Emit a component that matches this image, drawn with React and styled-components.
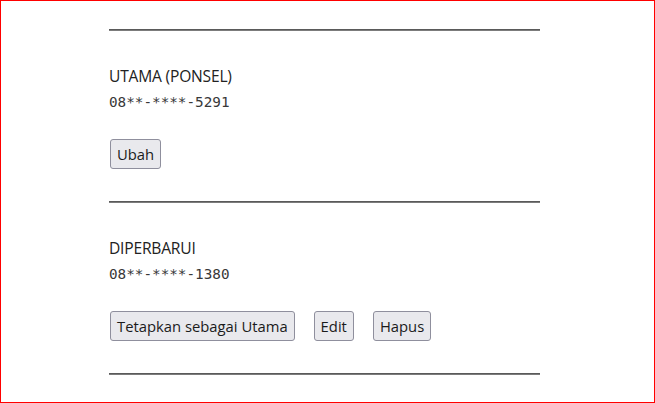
import React from 'react';
import styled, { createGlobalStyle } from 'styled-components';

const GlobalStyle = createGlobalStyle`
  html, body {
    margin: 0;
    padding: 0;
    background: #fff;
  }
  body {
    font-family: 'Open Sans', 'Noto Sans', sans-serif;
    color: #222;
  }
`;

const Frame = styled.div`
  box-sizing: border-box;
  height: 100vh;
  border: 1px solid #ff0000;
  overflow: hidden;
  padding-top: 28px;
`;

const Column = styled.div`
  width: 431px;
  margin-left: 108px;
`;

const Rule = styled.div`
  height: 0;
  border-top: 1px solid #5a5a5a;
  border-bottom: 1px solid #7c7c7c;
`;

const Section = styled.section`
  padding: 32px 0 32px;
`;

const Label = styled.div`
  font-size: 15.6px;
  line-height: 26px;
  letter-spacing: -0.2px;
  text-transform: uppercase;
`;

const Phone = styled.div`
  font-family: 'DejaVu Sans Mono', 'Liberation Mono', monospace;
  font-size: 14.3px;
  line-height: 26px;
  color: #383838;
`;

const Actions = styled.div`
  display: flex;
  gap: 18px;
  margin-top: 24px;
`;

const Button = styled.button`
  height: 30px;
  padding: 0 6px;
  margin-left: 1px;
  font-family: 'Open Sans', 'Noto Sans', sans-serif;
  font-size: 14.8px;
  color: #1b1b1b;
  background: #e9e9ed;
  border: 1px solid #8f8f9d;
  border-radius: 3px;
  cursor: pointer;
`;

const numbers = [
  { label: 'Utama (Ponsel)', phone: '08**-****-5291', actions: ['Ubah'] },
  { label: 'Diperbarui', phone: '08**-****-1380', actions: ['Tetapkan sebagai Utama', 'Edit', 'Hapus'] },
];

const App = () => (
  <>
    <GlobalStyle />
    <Frame>
      <Column>
        <Rule />
        {numbers.map((item) => (
          <React.Fragment key={item.phone}>
            <Section>
              <Label>{item.label}</Label>
              <Phone>{item.phone}</Phone>
              <Actions>
                {item.actions.map((a) => (
                  <Button key={a} type="button">{a}</Button>
                ))}
              </Actions>
            </Section>
            <Rule />
          </React.Fragment>
        ))}
      </Column>
    </Frame>
  </>
);

export default App;
